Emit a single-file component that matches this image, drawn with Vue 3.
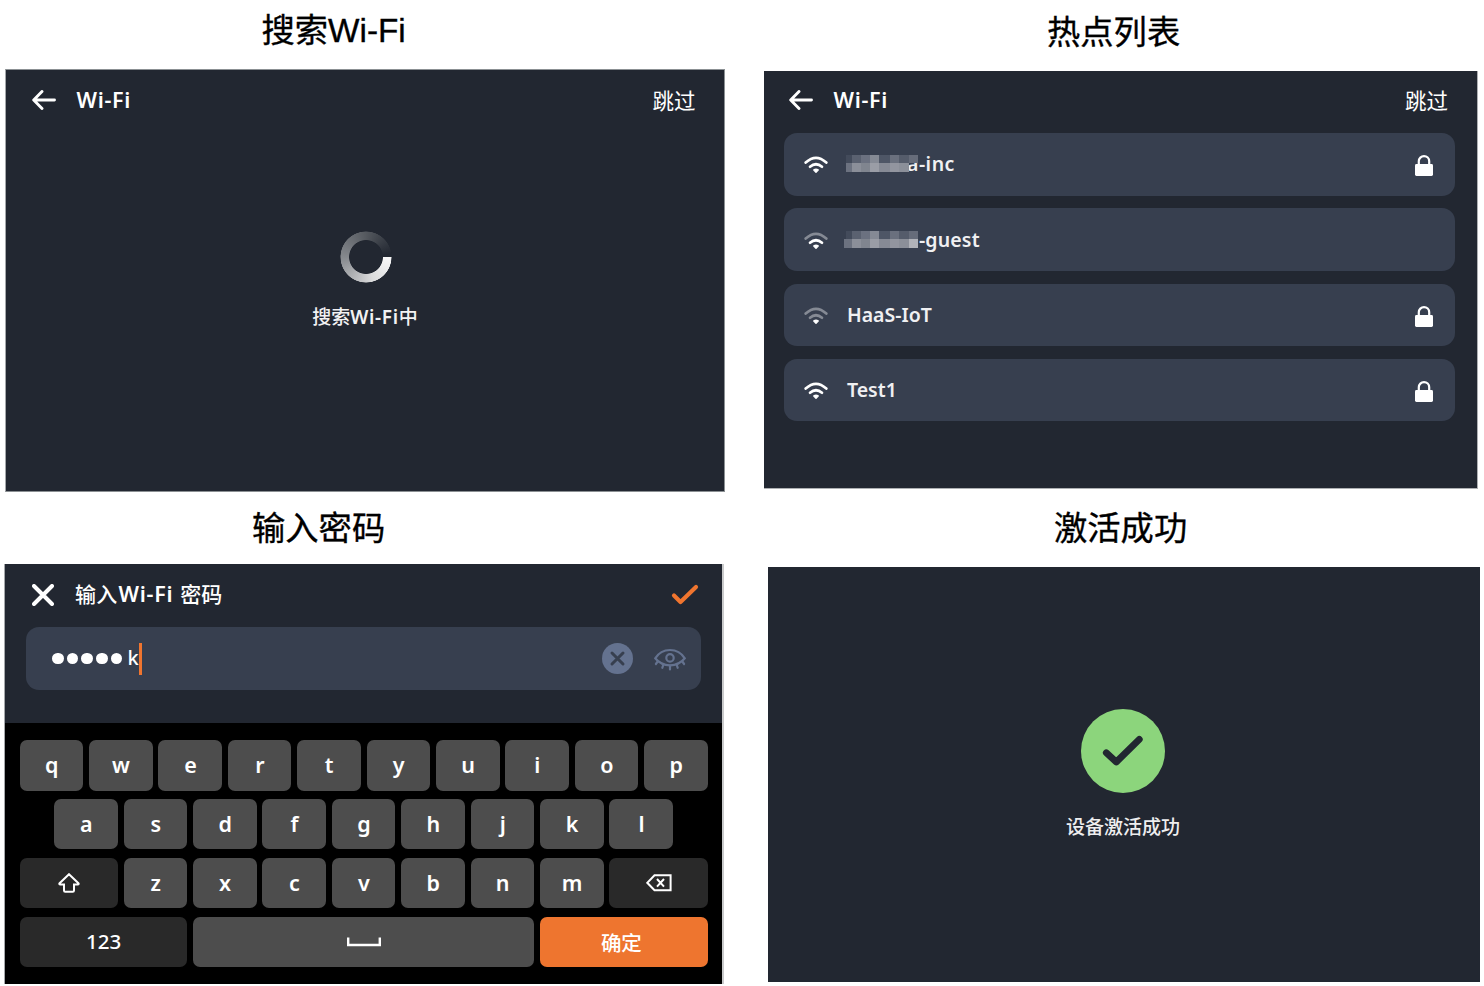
<script setup>
const networks = [
  { name: 'a-inc', masked: 'a', level: 3, locked: true },
  { name: '-guest', masked: 'b', level: 2, locked: false },
  { name: 'HaaS-IoT', level: 1, locked: true },
  { name: 'Test1', level: 3, locked: true },
]

const rowOne = 'qwertyuiop'.split('')
const rowTwo = 'asdfghjkl'.split('')
const rowThree = 'zxcvbnm'.split('')

// Censor blocks: [x, width, upper tone, lower tone]
const blocks = [
  [2, 6, '#434b5b', '#6c7280'],
  [8, 9, '#5a6170', '#8b8f99'],
  [17, 9, '#6b7180', '#80858f'],
  [26, 9, '#858a95', '#9a9da6'],
  [35, 11, '#4e5666', '#868a95'],
  [46, 9, '#6a707e', '#92959f'],
  [55, 10, '#555c6b', '#8b8f99'],
  [65, 9, '#666c7a', '#b0b2b9'],
]
</script>

<template>
  <main class="board">
    <div class="column left">
      <h2 class="title t-search">搜索Wi-Fi</h2>
      <section class="screen search">
        <header class="bar">
          <svg class="back" viewBox="0 0 24 20"><path d="M10 1.5 1.700 10 10 18.500M2 10H22.5" /></svg>
          <span class="bar-title">Wi-Fi</span>
          <span class="skip">跳过</span>
        </header>
        <div class="spinner"></div>
        <p class="hint">搜索<span class="lat">Wi-Fi</span>中</p>
      </section>

      <h2 class="title t-password">输入密码</h2>
      <section class="screen password">
        <header class="bar">
          <svg class="close" viewBox="0 0 22 22"><path d="M2 2 20 20M20 2 2 20" /></svg>
          <span class="bar-title cn">输入<span class="lat">Wi-Fi</span> 密码</span>
          <svg class="confirm" viewBox="0 0 28 22"><path d="M3 11.5 9.5 18 25 3" /></svg>
        </header>
        <div class="field">
          <i v-for="n in 5" :key="n" class="dot"></i>
          <span class="typed">k</span>
          <i class="caret"></i>
          <svg class="clear" viewBox="0 0 31 31">
            <circle cx="15.5" cy="15.5" r="15.5" />
            <path d="M10 10 21 21M21 10 10 21" />
          </svg>
          <svg class="eye" viewBox="0 0 32 23">
            <path d="M1.2 10.300C5 4.300 10 2 16 2S27 4.300 30.800 10.300C27 15 22 17.300 16 17.300S5 15 1.200 10.300Z" />
            <circle cx="16" cy="9.900" r="3.700" />
            <path d="M3.700 13.500 1.900 16M9.400 16.500 8.300 19.800M16 17.500V21.500M22.600 16.500 23.700 19.800M28.300 13.500 30.100 16" />
          </svg>
        </div>
        <div class="keyboard">
          <div class="keys">
            <span v-for="k in rowOne" :key="k" class="key"><b>{{ k }}</b></span>
          </div>
          <div class="keys">
            <span v-for="k in rowTwo" :key="k" class="key"><b>{{ k }}</b></span>
          </div>
          <div class="keys">
            <span class="key dark wide">
              <svg class="shift" viewBox="0 0 22 20"><path d="M11 1.200 20.400 10.200Q21.200 11.300 20 11.400H16V17.500Q16 18.800 14.800 18.800H7.200Q6 18.800 6 17.500V11.400H2Q.8 11.300 1.600 10.200Z" /></svg>
            </span>
            <span v-for="k in rowThree" :key="k" class="key"><b>{{ k }}</b></span>
            <span class="key dark wide">
              <svg class="erase" viewBox="0 0 26 18"><path d="M8.500 1.200H24.600V16.300H8.500L1.300 8.800ZM11 5 18 12.700M18 5 11 12.700" /></svg>
            </span>
          </div>
          <div class="keys">
            <span class="key dark side"><b class="num">123</b></span>
            <span class="key space">
              <svg class="bracket" viewBox="0 0 34 10"><path d="M1.200 .5V8H32.800V.5" /></svg>
            </span>
            <span class="key side ok">确定</span>
          </div>
        </div>
      </section>
    </div>

    <div class="column right">
      <h2 class="title t-list">热点列表</h2>
      <section class="screen list">
        <header class="bar">
          <svg class="back" viewBox="0 0 24 20"><path d="M10 1.5 1.700 10 10 18.500M2 10H22.5" /></svg>
          <span class="bar-title">Wi-Fi</span>
          <span class="skip">跳过</span>
        </header>
        <ul class="networks">
          <li v-for="n in networks" :key="n.name" class="network">
            <svg class="wifi" viewBox="0 0 24 18">
              <path :class="{ weak: n.level < 3 }" d="M1.700 6.600Q12-2.800 22.300 6.600" />
              <path :class="{ weak: n.level < 2 }" d="M6 10.700Q12 5.800 18 10.700" />
              <path class="tip" d="M9.800 13.900Q12 12.700 14.200 13.900L12 16.200Z" />
            </svg>
            <span class="ssid" :class="n.masked ? 'ssid-' + n.masked : ''">
              {{ n.name }}
              <svg v-if="n.masked" class="mosaic" viewBox="0 0 74 17" shape-rendering="crispEdges">
                <template v-for="(b, i) in blocks" :key="i">
                  <rect :x="b[0]" y="0" :width="b[1]" height="8" :fill="b[2]" />
                  <rect
                    v-if="n.masked === 'b' || i < 7"
                    :x="n.masked === 'b' && i === 0 ? 0 : b[0]"
                    y="8"
                    :width="n.masked === 'b' && i === 0 ? 8 : b[1]"
                    height="9"
                    :fill="b[3]"
                  />
                </template>
              </svg>
            </span>
            <svg v-if="n.locked" class="lock" viewBox="0 0 18 21">
              <path d="M3.800 10V6.300A5.200 5.200 0 0 1 14.200 6.300V10" />
              <rect x="0" y="9" width="18" height="12" rx="1.400" />
            </svg>
          </li>
        </ul>
      </section>

      <h2 class="title t-success">激活成功</h2>
      <section class="screen success">
        <svg class="badge" viewBox="0 0 84 84">
          <circle cx="42" cy="42" r="42" />
          <path d="M25.300 43.800 35.300 53 58.300 30.300" />
        </svg>
        <p class="hint">设备激活成功</p>
      </section>
    </div>
  </main>
</template>

<style>
body {
  background: #fff;
}
</style>

<style scoped>
.board {
  display: flex;
  width: 1484px;
  height: 986px;
  overflow: hidden;
  background: #fff;
  font-family: 'Noto Sans', 'Noto Sans CJK SC', sans-serif;
  color: #fff;
}
.board *,
.board {
  box-sizing: border-box;
}
.column {
  display: flex;
  flex-direction: column;
  align-items: flex-start;
}
.left {
  width: 764px;
}
.right {
  width: 720px;
}
svg {
  display: block;
  flex: none;
  fill: none;
}
.title {
  margin: 0;
  color: #000;
  font: 400 33.300px/48px 'Liberation Sans', 'Noto Sans CJK SC', sans-serif;
  -webkit-text-stroke: 0.350px #000;
  white-space: nowrap;
}
.t-search {
  height: 69px;
  padding: 7px 0 0 261.500px;
}
.t-password {
  height: 72px;
  padding: 13px 0 0 252px;
}
.t-list {
  height: 71px;
  padding: 9px 0 0 283px;
}
.t-success {
  height: 78px;
  padding: 16px 0 0 290px;
}
.screen {
  background: #222731;
  overflow: hidden;
}
.search {
  width: 720px;
  height: 423px;
  margin-left: 5px;
  border: 1px solid #8b9093;
  border-left-color: #a5a8ab;
}
.password {
  width: 720px;
  height: 420px;
  margin-left: 4px;
  border-right: 2px solid #c9cacb;
  border-left: 1px solid #a5a8ab;
}
.list {
  width: 714px;
  height: 418px;
  border-right: 1px solid #aeb0b3;
  border-bottom: 1px solid #aeb0b3;
}
.success {
  display: flex;
  flex-direction: column;
  align-items: center;
  width: 712px;
  height: 415px;
  margin-left: 4px;
  padding: 142px 2px 0 0;
}
.bar {
  display: flex;
  align-items: center;
  height: 62px;
}
.search .bar {
  height: 60px;
  padding: 0 28.500px 0 26px;
}
.list .bar {
  height: 58px;
  padding: 0 29px 0 25px;
}
.password .bar {
  height: 60px;
  padding: 0 23px 0 26.500px;
}
.back {
  width: 24px;
  height: 20px;
  stroke: #fff;
  stroke-width: 2.900;
  stroke-linecap: round;
  stroke-linejoin: round;
}
.bar-title {
  margin: -1px 0 0 20.500px;
  font-size: 21.500px;
  font-weight: 600;
  letter-spacing: 0.700px;
  white-space: nowrap;
}
.bar-title.cn {
  margin: -3px 0 0 21.500px;
  font-family: 'Noto Sans CJK SC', sans-serif;
  font-size: 21px;
  font-weight: 500;
  letter-spacing: 0.200px;
}
.lat {
  font-family: 'Noto Sans', sans-serif;
  font-weight: 600;
}
.bar-title .lat {
  margin: 0 2px 0 1.200px;
  font-size: 21.500px;
  letter-spacing: 0.700px;
}
.skip {
  margin-left: auto;
  font: 400 21.500px/30px 'Noto Sans CJK SC', sans-serif;
}
.close {
  width: 22px;
  height: 22px;
  margin-top: 1px;
  stroke: #fff;
  stroke-width: 4;
  stroke-linecap: round;
}
.confirm {
  width: 28px;
  height: 22px;
  margin: 2px 0 0 auto;
  stroke: #f0752f;
  stroke-width: 4.200;
  stroke-linecap: round;
  stroke-linejoin: round;
}
.spinner {
  width: 52px;
  height: 52px;
  margin: 101px auto 0 334px;
  border-radius: 50%;
  background: conic-gradient(from 90deg, #f8f8f8, #dcdcdd 20%, #85888d 50%, #55595f 75%, #222731 98%);
  -webkit-mask: radial-gradient(circle, transparent 16.500px, #000 17.300px, #000 25.200px, transparent 25.900px);
  mask: radial-gradient(circle, transparent 16.500px, #000 17.300px, #000 25.200px, transparent 25.900px);
}
.hint {
  margin: 0;
  font: 500 19px/28px 'Noto Sans CJK SC', sans-serif;
  text-align: center;
  white-space: nowrap;
}
.search .hint {
  margin-top: 19px;
  color: #f2f2f3;
}
.hint .lat {
  letter-spacing: 0.700px;
}
.badge {
  width: 84px;
  height: 84px;
}
.badge circle {
  fill: #8cd57c;
}
.badge path {
  stroke: #222731;
  stroke-width: 6.800;
  stroke-linecap: round;
  stroke-linejoin: round;
}
.success .hint {
  margin-top: 19px;
  color: #eeeeef;
}
.networks {
  display: flex;
  flex-direction: column;
  gap: 12.700px;
  margin: 4px 22px 0 20.400px;
  padding: 0;
  list-style: none;
}
.network {
  display: flex;
  align-items: center;
  height: 62.600px;
  padding: 0 22px 0 19.200px;
  border-radius: 13px;
  background: #373f4f;
}
.wifi {
  width: 24px;
  height: 18px;
  margin-top: 2px;
  stroke: #fff;
  stroke-width: 2.700;
  stroke-linecap: round;
}
.wifi .weak {
  stroke: #858a94;
}
.wifi .tip {
  fill: #fff;
  stroke-width: 1.400;
  stroke-linejoin: round;
}
.ssid {
  position: relative;
  margin-left: 19.400px;
  font-size: 19.500px;
  font-weight: 600;
  letter-spacing: 0;
  line-height: 28px;
  color: #f0f0f2;
  white-space: nowrap;
}
.ssid-a {
  padding-left: 60px;
  letter-spacing: 0.500px;
}
.ssid-b {
  padding-left: 72px;
  letter-spacing: 0.150px;
}
.mosaic {
  position: absolute;
  left: -3px;
  top: 5px;
  width: 74px;
  height: 17px;
}
.lock {
  width: 18px;
  height: 21px;
  margin: 3px 0 0 auto;
  stroke: #fff;
  stroke-width: 2.200;
}
.lock rect {
  fill: #fff;
  stroke: none;
}
.field {
  display: flex;
  align-items: center;
  width: 675.600px;
  height: 63px;
  margin: 3px 0 0 20.500px;
  padding: 0 15.500px 0 26.500px;
  border-radius: 13px;
  background: #373f4f;
}
.dot {
  width: 11.600px;
  height: 11.600px;
  margin-right: 3.100px;
  border-radius: 50%;
  background: #fff;
}
.typed {
  margin: -2px 0 0 2px;
  font-size: 20px;
  font-weight: 500;
}
.caret {
  width: 3px;
  height: 32px;
  background: #f0752f;
}
.clear {
  width: 31px;
  height: 31px;
  margin-left: auto;
}
.clear circle {
  fill: #64728f;
}
.clear path {
  stroke: #373f4f;
  stroke-width: 3;
  stroke-linecap: round;
}
.eye {
  width: 32px;
  height: 23px;
  margin: 2px 0 0 21px;
  stroke: #64728f;
  stroke-width: 2.200;
  stroke-linecap: round;
}
.keyboard {
  display: flex;
  flex-direction: column;
  gap: 8.400px;
  height: 261px;
  margin-top: 33px;
  padding: 17.300px 14px 0 14.300px;
  background: #000;
}
.keys {
  display: flex;
  justify-content: center;
  gap: 5.800px;
}
.key {
  display: flex;
  align-items: center;
  justify-content: center;
  width: 63.600px;
  height: 50.400px;
  border-radius: 7px;
  background: #4d4d4d;
}
.key b {
  margin: 0 0 0 0.500px;
  font-size: 21.500px;
  font-weight: 600;
  line-height: 30px;
}
.key .num {
  margin-top: -1px;
  font-size: 20.500px;
  font-weight: 500;
}
.dark {
  background: #292929;
}
.wide {
  width: 98.300px;
}
.side {
  width: 167.700px;
}
.space {
  width: 341.200px;
}
.ok {
  padding-right: 5px;
  background: #ee752f;
  font: 500 20.500px/30px 'Noto Sans CJK SC', sans-serif;
}
.shift {
  width: 22px;
  height: 20px;
  stroke: #fff;
  stroke-width: 2;
}
.erase {
  width: 26px;
  height: 18px;
  stroke: #fff;
  stroke-width: 2;
}
.bracket {
  width: 34px;
  height: 10px;
  stroke: #fff;
  stroke-width: 2.400;
}
</style>
